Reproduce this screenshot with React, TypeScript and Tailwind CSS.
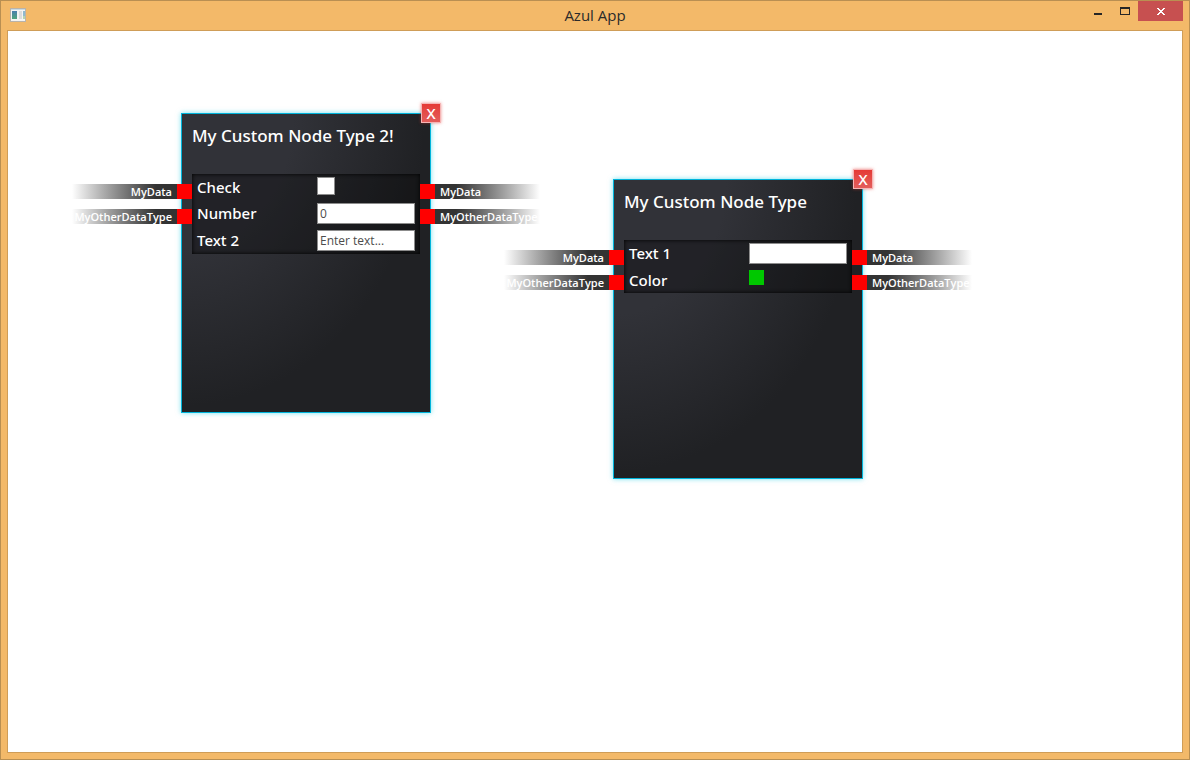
import { useId, useState } from 'react';

type Field = {
  label: string;
  kind: 'checkbox' | 'number' | 'text' | 'color';
  value?: string;
  placeholder?: string;
};

type GraphNode = { id: number; title: string; x: number; y: number; fields: Field[] };

const PORTS = ['MyData', 'MyOtherDataType'];

const NODES: GraphNode[] = [
  {
    id: 1,
    title: 'My Custom Node Type 2!',
    x: 173,
    y: 82,
    fields: [
      { label: 'Check', kind: 'checkbox' },
      { label: 'Number', kind: 'number', value: '0' },
      { label: 'Text 2', kind: 'text', placeholder: 'Enter text...' },
    ],
  },
  {
    id: 2,
    title: 'My Custom Node Type',
    x: 605,
    y: 148,
    fields: [
      { label: 'Text 1', kind: 'text' },
      { label: 'Color', kind: 'color', value: '#00c800' },
    ],
  },
];

function AppIcon() {
  return (
    <svg width="16" height="14" viewBox="0 0 16 14" shapeRendering="crispEdges" aria-hidden="true">
      <defs>
        <linearGradient id="pane" x1="0" y1="0" x2="0" y2="1">
          <stop offset="0" stopColor="#4a7fae" />
          <stop offset="1" stopColor="#4fa57c" />
        </linearGradient>
      </defs>
      <rect x="0" y="0" width="16" height="14" fill="#b9b3aa" />
      <rect x="1" y="1" width="14" height="12" fill="#f4f4f4" />
      <rect x="1" y="1" width="14" height="1" fill="#c9dbe6" />
      <rect x="2" y="3" width="5" height="8" fill="url(#pane)" />
      <rect x="9" y="3" width="3" height="8" fill="#dcdcdc" />
      <rect x="13" y="3" width="2" height="5" fill="#8fb9cf" />
      <rect x="13" y="8" width="2" height="3" fill="#b5d4b0" />
    </svg>
  );
}

function TitleBar() {
  return (
    <header className="grid h-[29px] grid-cols-[1fr_auto_1fr] items-start">
      <div className="pt-[7px] pl-[9px]">
        <AppIcon />
      </div>
      <h1 className="text-[15px] leading-[29px] text-[#2b2b2b]">Azul App</h1>
      <div className="flex h-5 justify-end pr-1.5">
        <button type="button" aria-label="Minimize" className="flex w-[27px] items-center justify-center">
          <svg width="10" height="10" viewBox="0 0 10 10" shapeRendering="crispEdges">
            <rect x="1" y="7" width="8" height="2" fill="#262626" />
          </svg>
        </button>
        <button type="button" aria-label="Maximize" className="flex w-[27px] items-center justify-center">
          <svg width="10" height="8" viewBox="0 0 10 8" shapeRendering="crispEdges">
            <path d="M0 0h10v8H0zM1 2v5h8V2z" fill="#262626" fillRule="evenodd" />
          </svg>
        </button>
        <button
          type="button"
          aria-label="Close"
          className="flex w-[45px] items-center justify-center bg-[#c75050]"
        >
          <svg width="8" height="7" viewBox="0 0 8 7" shapeRendering="crispEdges">
            <path
              d="M0 0h2v1h1v1h2V1h1V0h2v1H7v1H6v1H5v1h1v1h1v1h1v1H6V6H5V5H3v1H2v1H0V6h1V5h1V4h1V3H2V2H1V1H0z"
              fill="#fff"
            />
          </svg>
        </button>
      </div>
    </header>
  );
}

function FieldRow({ field }: { field: Field }) {
  const id = useId();
  const short = field.kind === 'checkbox' || field.kind === 'color';
  return (
    <div className={short ? 'flex h-[26px] px-[5px] pt-[3px]' : 'flex h-[27px] px-[5px] pt-[3px]'}>
      <label htmlFor={id} className="w-[120px] font-['Noto_Sans',sans-serif] text-[15px] leading-5 font-medium text-white">
        {field.label}
      </label>
      {field.kind === 'checkbox' && (
        <input
          id={id}
          type="checkbox"
          className="size-[18px] appearance-none border border-[#8c8c8c] bg-white checked:bg-[#00c8ff]"
        />
      )}
      {field.kind === 'color' && (
        <input
          id={id}
          type="color"
          defaultValue={field.value}
          className="size-[15px] appearance-none border-0 p-0 [&::-webkit-color-swatch]:rounded-none [&::-webkit-color-swatch]:border-0 [&::-webkit-color-swatch-wrapper]:p-0"
        />
      )}
      {(field.kind === 'number' || field.kind === 'text') && (
        <input
          id={id}
          type="text"
          inputMode={field.kind === 'number' ? 'decimal' : 'text'}
          defaultValue={field.value}
          placeholder={field.placeholder}
          className="h-[21px] min-w-0 flex-1 border border-[#8c8c8c] bg-white px-0.5 text-[12px] text-[#4c4c4c] outline-none placeholder:text-[#4c4c4c]"
        />
      )}
    </div>
  );
}

function Ports({ side }: { side: 'in' | 'out' }) {
  const isInput = side === 'in';
  return (
    <ul
      className={
        isInput
          ? 'absolute top-[70px] right-[238px] flex flex-col gap-2.5'
          : 'absolute top-[70px] left-[238px] flex flex-col gap-2.5'
      }
    >
      {PORTS.map((name) => (
        <li key={name} className={isInput ? 'flex h-[15px]' : 'flex h-[15px] flex-row-reverse'}>
          <span
            className={
              isInput
                ? 'flex w-[105px] justify-end bg-linear-to-l from-[#333] from-20% to-white px-[5px] text-[11px] leading-[15px] font-semibold text-white'
                : 'flex w-[105px] justify-start bg-linear-to-r from-[#333] from-20% to-white px-[5px] text-[11px] leading-[15px] font-semibold text-white'
            }
          >
            {name}
          </span>
          <button type="button" aria-label={name} className="size-[15px] bg-[#f00]" />
        </li>
      ))}
    </ul>
  );
}

function NodeCard({ node, onRemove }: { node: GraphNode; onRemove: () => void }) {
  return (
    <article
      className="absolute h-[300px] w-[250px] border border-[#00b4db] bg-[radial-gradient(100%_100%_at_0_0,#313238_45%,#202124_98%)] p-2.5 shadow-[0_0_5px_#00c8e088]"
      style={{ left: node.x, top: node.y }}
    >
      <h2 className="h-[50px] font-['Noto_Sans',sans-serif] text-[17px] leading-6 font-medium whitespace-nowrap text-white">
        {node.title}
      </h2>
      <div className="bg-black/30 shadow-[inset_0_0_4px_#000]">
        {node.fields.map((field) => (
          <FieldRow key={field.label} field={field} />
        ))}
      </div>
      <Ports side="in" />
      <Ports side="out" />
      <button
        type="button"
        onClick={onRemove}
        className="absolute -top-[11px] -right-[11px] flex size-5 items-center justify-center border border-[#f5b5b5] bg-linear-to-b from-[#e53935] to-[#e35d5b] font-['Noto_Sans',sans-serif] text-[15px] leading-5 font-medium text-white shadow-[0_0_3px_#e5393588]"
      >
        X
      </button>
    </article>
  );
}

export default function App() {
  const [nodes, setNodes] = useState(NODES);
  return (
    <div className="flex min-h-screen flex-col border border-[#b98f52] bg-[#f3b969] font-['Open_Sans','Noto_Sans',sans-serif]">
      <TitleBar />
      <main className="relative mx-1.5 mb-1.5 flex-1 overflow-hidden border border-[#cf9d58] bg-white">
        {nodes.map((node) => (
          <NodeCard
            key={node.id}
            node={node}
            onRemove={() => setNodes(nodes.filter((other) => other.id !== node.id))}
          />
        ))}
      </main>
    </div>
  );
}
